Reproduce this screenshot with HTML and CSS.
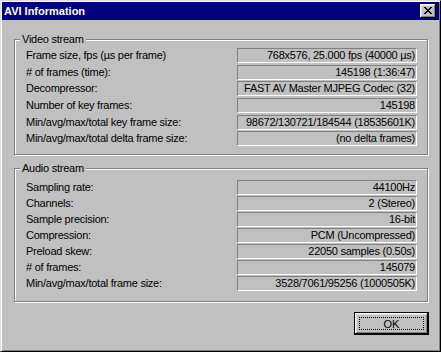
FILE: index.html
```html
<!doctype html>
<html>
<head>
  <title>AVI Information</title>
  <meta charset='UTF-8'>
  <link rel="stylesheet" href="styles.css">
</head>
<body>
  <div class='window'>
    <div class='titlebar'>
      <span class='title'>AVI Information</span>
      <button class='close'>
        <svg width='8' height='7' viewBox='0 0 8 7' shape-rendering='crispEdges'>
          <path fill='#000' d='M0 0h2v1H0z M6 0h2v1H6z M1 1h2v1H1z M5 1h2v1H5z M2 2h4v1H2z M3 3h2v1H3z M2 4h4v1H2z M1 5h2v1H1z M5 5h2v1H5z M0 6h2v1H0z M6 6h2v1H6z'/>
        </svg>
      </button>
    </div>
    <div class='content'>
      <div class='group video'>
        <div class='group-title'><span>Video stream</span></div>
        <div class='rows'>
          <span class='label'>Frame size, fps (µs per frame)</span><span class='value'>768x576, 25.000 fps (40000 µs)</span>
          <span class='label'># of frames (time):</span><span class='value'>145198 (1:36:47)</span>
          <span class='label'>Decompressor:</span><span class='value'>FAST AV Master MJPEG Codec (32)</span>
          <span class='label'>Number of key frames:</span><span class='value'>145198</span>
          <span class='label'>Min/avg/max/total key frame size:</span><span class='value'>98672/130721/184544 (18535601K)</span>
          <span class='label'>Min/avg/max/total delta frame size:</span><span class='value'>(no delta frames)</span>
        </div>
      </div>
      <div class='group audio'>
        <div class='group-title'><span>Audio stream</span></div>
        <div class='rows'>
          <span class='label'>Sampling rate:</span><span class='value'>44100Hz</span>
          <span class='label'>Channels:</span><span class='value'>2 (Stereo)</span>
          <span class='label'>Sample precision:</span><span class='value'>16-bit</span>
          <span class='label'>Compression:</span><span class='value'>PCM (Uncompressed)</span>
          <span class='label'>Preload skew:</span><span class='value'>22050 samples (0.50s)</span>
          <span class='label'># of frames:</span><span class='value'>145079</span>
          <span class='label'>Min/avg/max/total frame size:</span><span class='value'>3528/7061/95256 (1000505K)</span>
        </div>
      </div>
      <div class='actions'>
        <button class='ok'><span>OK</span></button>
      </div>
    </div>
  </div>
</body>
</html>
```

FILE: styles.css
```css
body {
  margin: 0;
  font: 11px "Liberation Sans", Arial, sans-serif;
  letter-spacing: -0.25px;
  color: #000
}
.window {
  width: 441px;
  height: 352px;
  box-sizing: border-box;
  background: #c0c0c0;
  border: 1px solid;
  border-color: #dfdfdf #000 #000 #dfdfdf;
  box-shadow: inset 1px 1px #fff, inset -1px -1px #808080;
  padding: 1px
}
.titlebar {
  height: 18px;
  background: #000080;
  display: flex;
  align-items: center;
  padding-left: 2px
}
.title {
  flex: 1;
  color: #fff;
  font-weight: bold;
  letter-spacing: 0;
  line-height: 13px
}
.close {
  width: 16px;
  height: 14px;
  margin-right: 3px;
  padding: 0 0 1px 0;
  border: 0;
  background: #c0c0c0;
  box-shadow: inset -1px -1px #000, inset 1px 1px #fff, inset -2px -2px #808080, inset 2px 2px #dfdfdf;
  display: flex;
  align-items: center;
  justify-content: center
}
.close svg { display: block }
.content { padding: 0 11px 0 12px }
.group {
  box-sizing: border-box;
  border: 1px solid #808080;
  box-shadow: 1px 1px 0 #fff, inset 1px 1px 0 #fff;
  padding: 0 10px 0 11px
}
.video { height: 116px; margin-top: 19px }
.audio { height: 134px; margin-top: 13px }
.group-title {
  height: 13px;
  line-height: 13px;
  margin-top: -7px
}
.group-title span {
  display: inline-block;
  background: #c0c0c0;
  padding: 0 2px;
  margin-left: -6px
}
.rows {
  display: grid;
  grid-template-columns: 1fr 180px;
  grid-auto-rows: 15px
}
.video .rows { margin-top: 2px; row-gap: 1.67px }
.audio .rows { margin-top: 5px; row-gap: 1px }
.label {
  line-height: 15px;
  white-space: nowrap
}
.value {
  border: 1px solid;
  border-color: #808080 #fff #fff #808080;
  padding: 0 1px 0 2px;
  line-height: 13px;
  text-align: right;
  white-space: nowrap;
  overflow: hidden
}
.actions {
  display: flex;
  justify-content: flex-end;
  margin: 10px -1px 0 0
}
.ok {
  width: 75px;
  height: 23px;
  padding: 4px;
  background: #c0c0c0;
  border: 1px solid #000;
  box-shadow: inset -1px -1px #000, inset 1px 1px #fff, inset -2px -2px #808080, inset 2px 2px #dfdfdf;
  font: inherit;
  display: flex
}
.ok span {
  flex: 1;
  border: 1px dotted #000;
  line-height: 13px;
  text-align: center
}
```
